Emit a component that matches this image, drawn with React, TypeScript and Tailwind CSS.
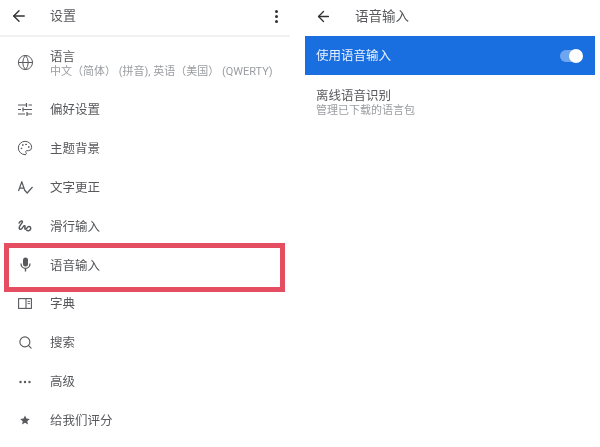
import { ArrowLeft, Globe, Palette, Search } from "lucide-react";
import type { ReactNode } from "react";

const font = "font-['Roboto','Noto_Sans_CJK_SC',sans-serif]";

function SlidersIcon() {
  return (
    <svg width="14" height="13" viewBox="0 0 14 13" fill="none" stroke="currentColor" strokeWidth="1.2">
      <path d="M0 2 H8 M10.5 2 H14 M8.5 0 V4" />
      <path d="M0 6.5 H3 M5.5 6.5 H14 M5 4.5 V8.5" />
      <path d="M0 11 H7 M9.5 11 H14 M9 9 V13" />
    </svg>
  );
}

function SpellIcon() {
  return (
    <svg width="15" height="13" viewBox="0 0 15 13" fill="none" stroke="currentColor" strokeWidth="1.2">
      <path d="M0.5 10 L3.8 0.8 L7 10 M1.6 7.2 H6" />
      <path d="M7 9.5 L9.2 12 L14.5 6" />
    </svg>
  );
}

function GestureIcon() {
  return (
    <svg width="14" height="12" viewBox="0 0 14 12" fill="none" stroke="currentColor" strokeWidth="1.5">
      <path d="M0.8 3.5 C2 1 4.2 0.4 4.4 1.6 C4.6 3.2 1 5.5 1.2 8 C1.5 10.5 4 9 5 7 C5.8 5.4 7 5.2 7 6.6 C7 8 6.4 9.2 7.6 9.2 C8.8 9.2 9 6.6 11 6.6 C13 6.6 13.6 9.6 11 10.6 C9.5 11 8.6 10.4 8.4 9.8" />
    </svg>
  );
}

function MicIcon() {
  return (
    <svg width="11" height="15" viewBox="0 0 11 15" fill="none" stroke="currentColor">
      <rect x="3" y="0.5" width="5" height="9" rx="2.5" fill="currentColor" stroke="none" />
      <path d="M1 6.5 C1 13 10 13 10 6.5" strokeWidth="1.3" />
      <path d="M5.5 11 V14.5" strokeWidth="1.4" />
    </svg>
  );
}

function DictIcon() {
  return (
    <svg width="14" height="11" viewBox="0 0 14 11" fill="none" stroke="currentColor" strokeWidth="1.1">
      <rect x="0.6" y="0.6" width="12.8" height="9.8" />
      <path d="M8 0.6 V10.4" />
      <path d="M9.5 3.4 H12 M9.5 5.6 H12" strokeWidth="0.9" />
    </svg>
  );
}

function DotsIcon() {
  return (
    <svg width="12" height="4" viewBox="0 0 12 4" fill="currentColor">
      <circle cx="1.5" cy="2" r="1.2" />
      <circle cx="6" cy="2" r="1.2" />
      <circle cx="10.5" cy="2" r="1.2" />
    </svg>
  );
}

function StarIcon() {
  return (
    <svg width="10" height="10" viewBox="0 0 24 24" fill="currentColor">
      <path d="M12 1 L15.4 8.6 L23.6 9.4 L17.4 14.9 L19.2 23 L12 18.8 L4.8 23 L6.6 14.9 L0.4 9.4 L8.6 8.6 Z" />
    </svg>
  );
}

const rows: { icon: ReactNode; label: string; boxed?: boolean }[] = [
  { icon: <SlidersIcon />, label: "偏好设置" },
  { icon: <Palette size={16} strokeWidth={1.5} />, label: "主题背景" },
  { icon: <SpellIcon />, label: "文字更正" },
  { icon: <GestureIcon />, label: "滑行输入" },
  { icon: <MicIcon />, label: "语音输入", boxed: true },
  { icon: <DictIcon />, label: "字典" },
  { icon: <Search size={15} strokeWidth={1.8} />, label: "搜索" },
  { icon: <DotsIcon />, label: "高级" },
  { icon: <StarIcon />, label: "给我们评分" },
];

export default function App() {
  return (
    <div className={`${font} flex h-[447px] w-[600px] overflow-hidden bg-white text-[#58595c] blur-[0.4px]`}>
      <div className="w-[290px] shrink-0">
        <div className="flex h-[37px] items-center border-b-2 border-[#f1f1f1] pb-[3px] pl-[10px] pr-[6px]">
          <ArrowLeft size={18} strokeWidth={1.8} className="text-[#303134]" />
          <span className="ml-[22px] flex-1 text-[13px]">设置</span>
          <div className="flex w-[16px] flex-col items-center gap-[2px]">
            <div className="h-[3px] w-[3px] rounded-full bg-[#303134]" />
            <div className="h-[3px] w-[3px] rounded-full bg-[#303134]" />
            <div className="h-[3px] w-[3px] rounded-full bg-[#303134]" />
          </div>
        </div>
        <div className="flex h-[54px] items-center">
          <div className="flex w-[50px] justify-center pb-[3px]">
            <Globe size={17} strokeWidth={1.4} />
          </div>
          <div className="flex flex-col">
            <span className="text-[12.5px] leading-[15px]">语言</span>
            <span className="whitespace-nowrap text-[11px] leading-[16px] text-[#9a9da1]">
              中文（简体） (拼音), 英语（美国） (QWERTY)
            </span>
          </div>
        </div>
        {rows.map((row) => (
          <div key={row.label} className="relative flex h-[38.875px] items-center">
            <div className="flex w-[50px] justify-center pb-[2px]">{row.icon}</div>
            <span className="text-[12.5px]">{row.label}</span>
            {row.boxed && (
              <div className="absolute left-[4px] top-[-4px] h-[49px] w-[281px] border-[5px] border-[#e54d60]" />
            )}
          </div>
        ))}
      </div>
      <div className="flex-1 pl-[15px] pr-[5px]">
        <div className="flex h-[36px] items-center pb-[3px] pl-[10px]">
          <ArrowLeft size={17} strokeWidth={1.8} className="text-[#303134]" />
          <span className="ml-[23px] text-[13.5px]">语音输入</span>
        </div>
        <div className="flex h-[39px] items-center justify-between bg-[#1a6fe0] pl-[11px] pr-[13px]">
          <span className="pt-[1px] text-[12.5px] text-[#e8f0fe]">使用语音输入</span>
          <div className="relative h-[12px] w-[22px] rounded-full bg-[#6ea6f0]">
            <div className="absolute right-[-1px] top-[-1px] h-[14px] w-[14px] rounded-full bg-white" />
          </div>
        </div>
        <div className="flex flex-col pl-[11px] pt-[13px]">
          <span className="text-[12.5px] leading-[16px]">离线语音识别</span>
          <span className="text-[11px] leading-[14px] text-[#9a9da1]">管理已下载的语言包</span>
        </div>
      </div>
    </div>
  );
}
